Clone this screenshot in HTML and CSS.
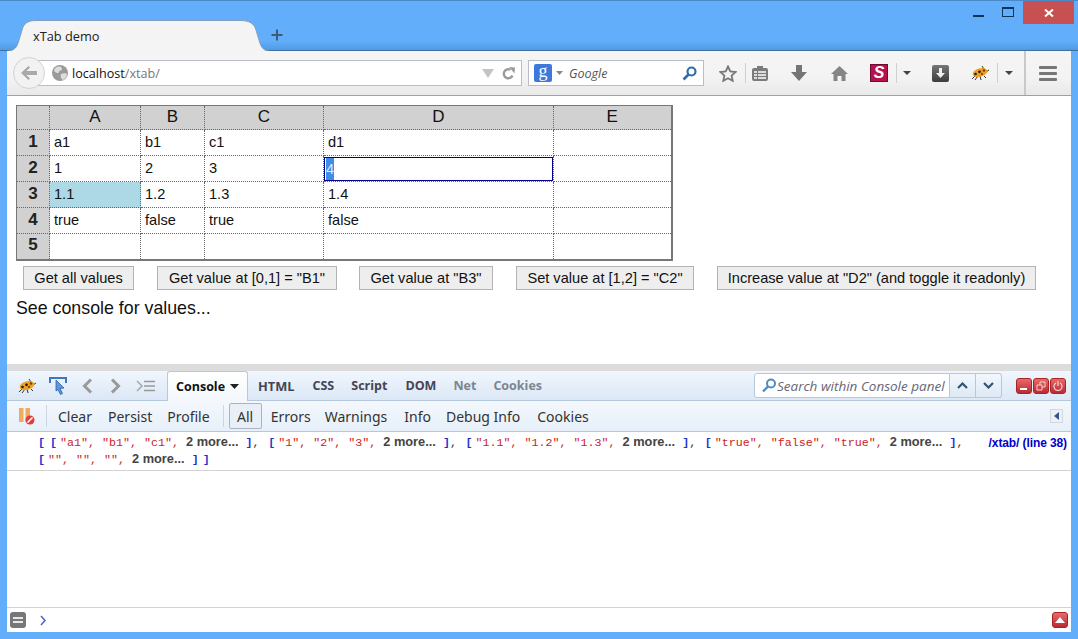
FILE: index.html
```html
<!DOCTYPE html>
<html lang="en">
<head>
<meta charset="utf-8">
<title>xTab demo</title>
<link rel="stylesheet" href="styles.css">
</head>
<body>
<div class="window">
  <header class="titlebar">
    <svg class="tab-shape" width="268" height="32" viewBox="0 0 268 32"><path d="M0 31.500C10 31.500 13 28 15 20L18 10C20 3 24 .5 32 .5H236C245 .5 250 3 252 10L255 20C257 28 260 31.500 268 31.500Z" fill="#f4f4f4" stroke="#7f9fc0"/></svg>
    <span class="tab-title">xTab demo</span>
    <span class="new-tab">
      <svg width="12" height="12" viewBox="0 0 12 12"><path d="M6 .5v11M.5 6h11" stroke="#3d5a78" stroke-width="2"/></svg>
    </span>
    <span class="win-min"></span>
    <span class="win-max"></span>
    <span class="win-close">
      <svg width="10" height="8" viewBox="0 0 10 8"><path d="M1 .5l8 7M9 .5l-8 7" stroke="#fff" stroke-width="2"/></svg>
    </span>
  </header>

  <nav class="navbar">
    <span class="back-btn">
      <svg width="16" height="14" viewBox="0 0 16 14"><path d="M7.500 0L0 7l7.500 7 1.500-1.500L5.500 9H16V5H5.500L9 1.500z" fill="#a9a9a9"/></svg>
    </span>
    <div class="urlbar">
      <svg class="globe" width="16" height="16" viewBox="0 0 16 16"><circle cx="8" cy="8" r="8" fill="#9a9a9a"/><path d="M5 2c3-1 5 0 5 2S7 5 7 7 4 8 2 6c0-2 1-3 3-4zM9 9c2-1 5-1 6 0 0 3-2 5-4 6-2-1-3-4-2-6z" fill="#dcdcdc"/></svg>
      <span class="host">localhost</span><span class="path">/xtab/</span>
      <svg class="url-drop" width="12" height="9" viewBox="0 0 12 9"><path d="M0 0h12L6 9z" fill="#c4c4c4"/></svg>
      <svg class="reload" width="13" height="13" viewBox="0 0 13 13"><path d="M10.500 8.500A4.500 4.500 0 1 1 8.500 2.800" fill="none" stroke="#9b9b9b" stroke-width="2.400"/><path d="M7 0l6 .5-.5 6z" fill="#9b9b9b"/></svg>
    </div>
    <div class="searchbar">
      <span class="g-logo">g</span>
      <svg class="caret-g" width="7" height="4" viewBox="0 0 7 4"><path d="M0 0h7L3.500 4z" fill="#888"/></svg>
      <span class="search-hint">Google</span>
      <svg class="mag" width="15" height="15" viewBox="0 0 15 15"><circle cx="9.500" cy="5.500" r="4" fill="none" stroke="#2f6ea8" stroke-width="2.200"/><path d="M6.500 8.500L1.500 13.500" stroke="#2f6ea8" stroke-width="2.600"/></svg>
    </div>
    <svg class="i-star" width="18" height="17" viewBox="0 0 18 17"><path d="M9 1.500l2.300 5 5.200.6-3.900 3.500 1.100 5.200L9 13.200l-4.700 2.600 1.100-5.200L1.500 7.100l5.200-.6z" fill="#f4f4f4" stroke="#777" stroke-width="1.800"/></svg>
    <span class="sep s1"></span>
    <svg class="i-clip" width="16" height="15" viewBox="0 0 16 15"><path d="M5 2V0h6v2h3a2 2 0 0 1 2 2v9a2 2 0 0 1-2 2H2a2 2 0 0 1-2-2V4a2 2 0 0 1 2-2z" fill="#7b7b7b"/><path d="M2 5h3v2H2zM6 5h8v2H6zM2 8h3v2H2zM6 8h8v2H6zM2 11h3v2H2zM6 11h8v2H6z" fill="#dcdcdc"/></svg>
    <svg class="i-down" width="16" height="16" viewBox="0 0 16 16"><path d="M5 0h6v7h5l-8 9-8-9h5z" fill="#757575"/></svg>
    <svg class="i-home" width="17" height="15" viewBox="0 0 17 15"><path d="M8.500 0L17 8h-2.500v7h-4v-5h-4v5h-4V8H0z" fill="#858585"/></svg>
    <span class="i-s">S</span>
    <span class="sep s2"></span>
    <svg class="caret c1" width="8" height="4" viewBox="0 0 8 4"><path d="M0 0h8L4 4z" fill="#444"/></svg>
    <span class="i-dl">
      <svg width="9" height="10" viewBox="0 0 9 10"><path d="M3 0h3v5h3L4.500 10 0 5h3z" fill="#f0f0f0"/></svg>
    </span>
    <svg class="i-bug" width="18" height="14" viewBox="0 0 18 14"><path d="M1 13L5 9M4 14L7 10M9 10l1 4M13 10l2 2M11 0l2 3M15 6l3-2" stroke="#333" stroke-width="1"/><ellipse cx="9" cy="6.500" rx="7.500" ry="4.200" fill="#f0a020" transform="rotate(-15 9 6.500)"/><circle cx="4.500" cy="8" r="1.300" fill="#222"/><circle cx="8.500" cy="5.800" r="1.400" fill="#222"/><circle cx="11" cy="8" r="1" fill="#6a3400"/><circle cx="13" cy="4.500" r="1.200" fill="#7a3c00"/></svg>
    <span class="sep s3"></span>
    <svg class="caret c2" width="8" height="4" viewBox="0 0 8 4"><path d="M0 0h8L4 4z" fill="#444"/></svg>
    <span class="divider"></span>
    <span class="i-menu"><i></i><i></i><i></i></span>
  </nav>

  <main class="page">
    <table class="sheet">
      <colgroup>
        <col class="c-h"><col class="c-a"><col class="c-b"><col class="c-c"><col class="c-d"><col class="c-e">
      </colgroup>
      <tr class="head"><th></th><th>A</th><th>B</th><th>C</th><th>D</th><th>E</th></tr>
      <tr><th>1</th><td>a1</td><td>b1</td><td>c1</td><td>d1</td><td></td></tr>
      <tr><th>2</th><td>1</td><td>2</td><td>3</td><td class="active"><div class="edit"><span class="sel">4</span></div></td><td></td></tr>
      <tr><th>3</th><td class="blue">1.1</td><td>1.2</td><td>1.3</td><td>1.4</td><td></td></tr>
      <tr><th>4</th><td>true</td><td>false</td><td>true</td><td>false</td><td></td></tr>
      <tr><th>5</th><td></td><td></td><td></td><td></td><td></td></tr>
    </table>
    <div class="buttons">
      <button class="btn b1">Get all values</button>
      <button class="btn b2">Get value at [0,1] = "B1"</button>
      <button class="btn b3">Get value at "B3"</button>
      <button class="btn b4">Set value at [1,2] = "C2"</button>
      <button class="btn b5">Increase value at "D2" (and toggle it readonly)</button>
    </div>
    <p class="note">See console for values...</p>
  </main>

  <section class="devtools">
    <div class="splitter"></div>
    <div class="fb-top">
      <svg class="i-bug fb-bug" width="18" height="14" viewBox="0 0 18 14"><path d="M1 13L5 9M4 14L7 10M9 10l1 4M13 10l2 2M11 0l2 3M15 6l3-2" stroke="#333" stroke-width="1"/><ellipse cx="9" cy="6.500" rx="7.500" ry="4.200" fill="#f0a020" transform="rotate(-15 9 6.500)"/><circle cx="4.500" cy="8" r="1.300" fill="#222"/><circle cx="8.500" cy="5.800" r="1.400" fill="#222"/><circle cx="11" cy="8" r="1" fill="#6a3400"/><circle cx="13" cy="4.500" r="1.200" fill="#7a3c00"/></svg>
      <svg class="fb-inspect" width="18" height="18" viewBox="0 0 18 18"><path d="M1 6V1h16v5" fill="none" stroke="#3f76c4" stroke-width="2"/><path d="M7 3l8 8-4 .5 2.500 5-2 1-2.500-5L7 14z" fill="#5d97e0" stroke="#2f5fa8" stroke-width=".8"/></svg>
      <svg class="fb-prev" width="11" height="16" viewBox="0 0 11 16"><path d="M9 1.500L2.500 8 9 14.500" fill="none" stroke="#999" stroke-width="3"/></svg>
      <svg class="fb-next" width="11" height="16" viewBox="0 0 11 16"><path d="M2 1.500L8.500 8 2 14.500" fill="none" stroke="#999" stroke-width="3"/></svg>
      <svg class="fb-cmd" width="19" height="12" viewBox="0 0 19 12"><path d="M1 1l5 5-5 5" fill="none" stroke="#aaa" stroke-width="1.600"/><path d="M8 1.500h11M8 6h11M8 10.500h11" stroke="#999" stroke-width="1.600"/></svg>
      <div class="fb-tab">Console<svg width="9" height="5" viewBox="0 0 9 5"><path d="M0 0h9L4.500 5z" fill="#222"/></svg></div>
      <span class="fb-link l-html">HTML</span>
      <span class="fb-link l-css">CSS</span>
      <span class="fb-link l-script">Script</span>
      <span class="fb-link l-dom">DOM</span>
      <span class="fb-link l-net dim">Net</span>
      <span class="fb-link l-cookies dim">Cookies</span>
      <div class="fb-search">
        <svg width="16" height="15" viewBox="0 0 15 15"><circle cx="9.500" cy="5.500" r="4" fill="none" stroke="#4f8cc4" stroke-width="2"/><path d="M6.500 8.500L1.500 13.500" stroke="#4f8cc4" stroke-width="2.400"/></svg>
        <span>Search within Console panel</span>
      </div>
      <div class="fb-step">
        <svg width="11" height="7" viewBox="0 0 11 7"><path d="M1 6l4.500-4.500L10 6" fill="none" stroke="#33536f" stroke-width="2.200"/></svg>
      </div>
      <div class="fb-step">
        <svg width="11" height="7" viewBox="0 0 11 7"><path d="M1 1l4.500 4.500L10 1" fill="none" stroke="#33536f" stroke-width="2.200"/></svg>
      </div>
      <span class="red r-first"><svg width="10" height="10" viewBox="0 0 10 10"><path d="M1 8h7" stroke="#fff" stroke-width="2"/></svg></span>
      <span class="red"><svg width="10" height="10" viewBox="0 0 10 10"><path d="M1 4h5v5H1zM4 4V1h5v5H6" fill="none" stroke="#f6d0d0"/></svg></span>
      <span class="red"><svg width="10" height="10" viewBox="0 0 10 10"><path d="M3 2a4 4 0 1 0 4 0M5 0v5" fill="none" stroke="#f6d0d0" stroke-width="1.200"/></svg></span>
    </div>
    <div class="fb-bar">
      <svg class="fb-pause" width="17" height="18" viewBox="0 0 17 18"><path d="M1 1h4.500v14H1zM7.500 1H12v14H7.500z" fill="#f0ab5e"/><circle cx="12" cy="13" r="4.500" fill="#e23b3b"/><path d="M9.500 15.500l5-5" stroke="#fff" stroke-width="1.600"/></svg>
      <span class="bar-sep a"></span>
      <span class="bar-item m-clear">Clear</span>
      <span class="bar-item m-persist">Persist</span>
      <span class="bar-item m-profile">Profile</span>
      <span class="bar-sep b"></span>
      <span class="bar-item all">All</span>
      <span class="bar-item m-errors">Errors</span>
      <span class="bar-item m-warn">Warnings</span>
      <span class="bar-item m-info">Info</span>
      <span class="bar-item m-debug">Debug Info</span>
      <span class="bar-item m-cook">Cookies</span>
      <span class="side-btn"><svg width="5" height="8" viewBox="0 0 5 8"><path d="M5 0v8L0 4z" fill="#33509a"/></svg></span>
    </div>
    <div class="log">
      <a class="log-src">/xtab/ (line 38)</a>
      <div class="log-msg"><b class="outer">[</b><b class="open">[</b><s>"a1",</s> <s>"b1",</s> <s>"c1",</s> <em>2 more...</em> <b>]</b><u>,</u> <b class="open">[</b><s>"1",</s> <s>"2",</s> <s>"3",</s> <em>2 more...</em> <b>]</b><u>,</u> <b class="open">[</b><s>"1.1",</s> <s>"1.2",</s> <s>"1.3",</s> <em>2 more...</em> <b>]</b><u>,</u> <b class="open">[</b><s>"true",</s> <s>"false",</s> <s>"true",</s> <em>2 more...</em> <b>]</b><u>,</u><br><b class="open">[</b><s>"",</s> <s>"",</s> <s>"",</s> <em>2 more...</em> <b class="close">]</b><b>]</b></div>
    </div>
    <div class="log-space"></div>
    <div class="cmdline">
      <span class="cmd-menu"><i></i><i></i></span>
      <svg class="cmd-prompt" width="6" height="11" viewBox="0 0 6 11"><path d="M1 1l4 4.500L1 10" fill="none" stroke="#4a63c8" stroke-width="1.500"/></svg>
      <span class="cmd-up"><svg width="10" height="6" viewBox="0 0 10 6"><path d="M5 0l5 6H0z" fill="#fff"/></svg></span>
    </div>
  </section>
</div>
</body>
</html>
```

FILE: styles.css
```css
* { box-sizing: border-box; }
html, body { margin: 0; padding: 0; }
body { width: 1078px; height: 639px; overflow: hidden; font-family: "Liberation Sans", Arial, sans-serif; }

.window {
  width: 1078px; height: 639px; display: flex; flex-direction: column;
  background: #62aefa; padding: 0 7px 7px; border-top: 1px solid #4a88c6; position: relative;
}

/* title bar */
.titlebar {
  height: 50px; display: flex; align-items: flex-start; position: relative; flex: none;
  margin: 0 -7px; padding-left: 33px;
  background: linear-gradient(#62aefa 0, #62aefa 40px, #4f98e0 50px);
  border-bottom: 1px solid #3f6f9f;
}
.tab-shape { position: absolute; left: 4px; top: 19px; }
.tab-title { position: relative; margin-top: 26px; font: 12.800px "Open Sans", sans-serif; color: #222; width: 226px; }
.new-tab { position: relative; margin: 28px 0 0 12px; display: flex; }
.win-min { width: 11px; height: 2px; background: #0f3458; margin: 14px 0 0 690px; }
.win-max { width: 12px; height: 10px; border: 1px solid #0f3458; border-top-width: 2px; margin: 6px 0 0 18px; }
.win-close { width: 51px; height: 23px; background: #c75050; margin-left: 9px; display: flex; align-items: center; justify-content: center; }

/* nav bar */
.navbar {
  height: 45px; flex: none; display: flex; align-items: center;
  background: linear-gradient(#f5f5f5, #f3f3f3 60%, #e9e9e9);
  border-bottom: 1px solid #a0a0a0;
  position: relative;
}
.back-btn {
  width: 32px; height: 32px; border-radius: 50%; border: 1px solid #d3d3d3; background: #f2f2f2;
  margin-left: 6px; display: flex; align-items: center; justify-content: center; position: relative; z-index: 1; flex: none;
}
.urlbar {
  width: 484px; height: 26px; margin-left: -7px; padding-left: 11px; background: #fff; border: 1px solid #b9bec4;
  border-left: 0; display: flex; align-items: center; font-size: 13px;
}
.globe { margin: 0 4px 0 3px; flex: none; }
.host, .path { font-family: "Open Sans", sans-serif; font-size: 12.600px; padding-top: 1px; }
.host { color: #111; }
.path { color: #777; }
.url-drop { margin-left: auto; }
.reload { margin: 0 6px 0 8px; }
.searchbar {
  width: 176px; height: 26px; margin-left: 6px; background: #fff; border: 1px solid #b9bec4;
  display: flex; align-items: center; padding: 0 6px 0 5px;
}
.g-logo {
  width: 18px; height: 18px; background: #3d78dc; color: #fff; border-radius: 2px; text-align: center;
  font: 18px/14px "Liberation Serif", serif;
}
.caret-g { margin-left: 4px; }
.search-hint { font: italic 12.500px "Open Sans", sans-serif; color: #555; margin-left: 6px; padding-top: 1px; }
.mag { margin-left: auto; }
.sep { width: 1px; height: 20px; background: #cfcfcf; flex: none; }
.i-star { margin-left: 15px; flex: none; }
.s1 { margin-left: 8px; }
.i-clip { margin-left: 6px; }
.i-down { margin-left: 23px; }
.i-home { margin-left: 24px; }
.i-s {
  width: 18px; height: 18px; margin-left: 22px; background: #b4134f; color: #fff; border: 1px solid #6d0c30;
  font: italic bold 16px/16px "Liberation Sans", sans-serif; text-align: center;
}
.s2 { margin-left: 8px; }
.c1 { margin-left: 6px; }
.i-dl {
  width: 17px; height: 17px; margin-left: 21px; border-radius: 2px; background: linear-gradient(#777, #3c3c3c);
  display: flex; align-items: center; justify-content: center;
}
.i-bug { flex: none; }
.navbar .i-bug { margin-left: 22px; }
.s3 { margin-left: 8px; }
.c2 { margin-left: 7px; }
.divider { width: 2px; height: 44px; background: #c9c9c9; margin-left: 11px; }
.i-menu { width: 18px; margin-left: 13px; display: flex; flex-direction: column; gap: 3px; }
.i-menu i { height: 3px; background: #777; border-radius: 1px; }

/* page */
.page { height: 268px; flex: none; background: #fff; padding: 9px 0 0 9px; }
.sheet {
  border-collapse: collapse; table-layout: fixed; width: 655px; font-size: 14.600px; color: #111;
  border: 2px solid #777; border-top-width: 1px; border-left-width: 1px;
}
.c-h { width: 33px; } .c-a { width: 91px; } .c-b { width: 64px; } .c-c { width: 119px; } .c-d { width: 230px; } .c-e { width: 118px; }
.sheet th, .sheet td { border: 1px dotted #666; padding: 0 0 2px 4px; height: 26px; }
.sheet th { background: #d1d1d1; padding: 0 0 2px; font-weight: normal; text-align: center; font-size: 17px; }
.sheet tr th:first-child { font-weight: bold; color: #222; }
.sheet .head th { height: 24px; font-size: 17px; }
.sheet td.blue { background: #add8e6; }
.sheet td.active { padding: 0; }
.edit { height: 24px; border: 1px solid #00008b; line-height: 22px; padding-left: 1px; }
.sel { background: #3d8ee8; color: #dfe9f5; display: inline-block; }

.buttons { display: flex; gap: 23px; margin: 5px 0 0 7px; }
.btn {
  height: 24px; padding: 0; background: #eee; border: 1px solid #b3b3b3; font: 14.600px "Liberation Sans", sans-serif; color: #111;
}
.b1 { width: 111px; } .b2 { width: 180px; } .b3 { width: 134px; margin-left: -1px; } .b4 { width: 178px; } .b5 { width: 319px; }
.note { margin: 7px 0 0; font-size: 17.800px; line-height: 22px; color: #111; }

/* devtools */
.devtools { flex: 1; display: flex; flex-direction: column; background: #fff; min-height: 0; }
.splitter { height: 7px; background: #dcdcdc; flex: none; }
.fb-top {
  height: 30px; flex: none; display: flex; align-items: center; position: relative;
  background: linear-gradient(#f0f6fd, #dbe8f6);
  font: bold 12.500px "Open Sans", sans-serif; border-bottom: 1px solid #b5c9de;
}
.fb-bug { margin-left: 11px; }
.fb-inspect { margin-left: 13px; }
.fb-prev { margin-left: 15px; }
.fb-next { margin-left: 17px; }
.fb-cmd { margin-left: 15px; }
.fb-tab {
  width: 81px; height: 30px; margin: 0 0 -1px 12px; display: flex; align-items: center; gap: 5px; padding-left: 8px;
  background: linear-gradient(#fff, #f3f8fd); border: 1px solid #b5c9de; border-bottom: 0; border-radius: 3px 3px 0 0; color: #111;
}
.fb-link { color: #445; }
.dim { color: #7c8590; }
.l-html { margin-left: 10px; font-size: 12.800px; } .l-css { margin-left: 18px; } .l-script { margin-left: 17px; }
.l-dom { margin-left: 18px; } .l-net { margin-left: 17px; } .l-cookies { margin-left: 17px; }
.fb-search {
  width: 196px; height: 25px; margin-left: auto; background: #fff; border: 1px solid #b5c9de; border-radius: 3px 0 0 3px;
  display: flex; align-items: center; padding-left: 6px; font: italic 13.500px "Open Sans", sans-serif; color: #667;
}
.fb-step {
  width: 26px; height: 25px; border: 1px solid #b5c9de; border-left: 0; background: linear-gradient(#f2f7fc, #dde9f5);
  display: flex; align-items: center; justify-content: center;
}
.fb-step:last-of-type { border-radius: 0 3px 3px 0; }
.red {
  width: 16px; height: 16px; border-radius: 3px; background: linear-gradient(#e86a6a, #b92a33); border: 1px solid #a22;
  display: flex; align-items: center; justify-content: center; margin-left: 1px;
}
.r-first { margin-left: 14px; }
.fb-top .red:last-child { margin-right: 5px; }

.fb-bar {
  height: 31px; flex: none; display: flex; align-items: center; position: relative;
  background: linear-gradient(#f4f8fd, #e6eff9); border-bottom: 1px solid #b5c9de;
  font: 14px "Noto Sans", "Open Sans", sans-serif; color: #333;
}
.fb-pause { margin-left: 11px; flex: none; }
.bar-sep { width: 1px; height: 22px; background: #ccd6e0; }
.bar-sep.a { margin-left: 11px; }
.bar-sep.b { margin-left: 13px; }
.m-clear { margin-left: 11px; } .m-persist { margin-left: 16px; } .m-profile { margin-left: 15px; }
.all {
  width: 33px; height: 26px; margin-left: 5px; display: flex; align-items: center; justify-content: center;
  background: #e9eff6; border: 1px solid #a9b4c0; border-radius: 2px;
}
.m-errors { margin-left: 9px; } .m-warn { margin-left: 14px; } .m-info { margin-left: 17px; }
.m-debug { margin-left: 15px; } .m-cook { margin-left: 17px; }
.side-btn {
  width: 13px; height: 14px; margin: 0 8px 0 auto; background: #f0f0f0; border: 1px solid #cfd8e2;
  display: flex; align-items: center; justify-content: center;
}

.log { height: 39px; flex: none; padding: 3px 4px 0 31px; border-bottom: 1px solid #d3d3d3; }
.log-src { float: right; font: bold 12px/17px "Liberation Sans", sans-serif; color: #0000cc; letter-spacing: -.1px; }
.log-msg { font: 11.667px/17px "Liberation Mono", monospace; color: #333; white-space: nowrap; }
.log-msg b { font-weight: bold; color: #2233cc; line-height: 1; }
.log-msg s { text-decoration: none; color: #cc2222; }
.log-msg em { font: bold 12.800px/1 "Liberation Sans", sans-serif; color: #444; }
.log-msg u { text-decoration: none; margin-right: 1.700px; }
.log-msg .outer { margin-right: 5px; }
.log-msg .open { margin-right: 3px; }
.log-msg .close { margin-right: 4px; }

.log-space { flex: 1; min-height: 0; }
.cmdline { height: 25px; flex: none; border-top: 1px solid #d3d3d3; display: flex; align-items: center; }
.cmd-menu {
  width: 16px; height: 16px; margin-left: 3px; border-radius: 3px; background: #777; display: flex; flex-direction: column;
  gap: 2px; align-items: center; justify-content: center;
}
.cmd-menu i { width: 10px; height: 2px; background: #e8e8e8; }
.cmd-prompt { margin-left: 14px; }
.cmd-up {
  width: 16px; height: 16px; margin: 0 3px 0 auto; border-radius: 3px; background: linear-gradient(#e86a6a, #b92a33);
  border: 1px solid #a22; display: flex; align-items: center; justify-content: center;
}
```
